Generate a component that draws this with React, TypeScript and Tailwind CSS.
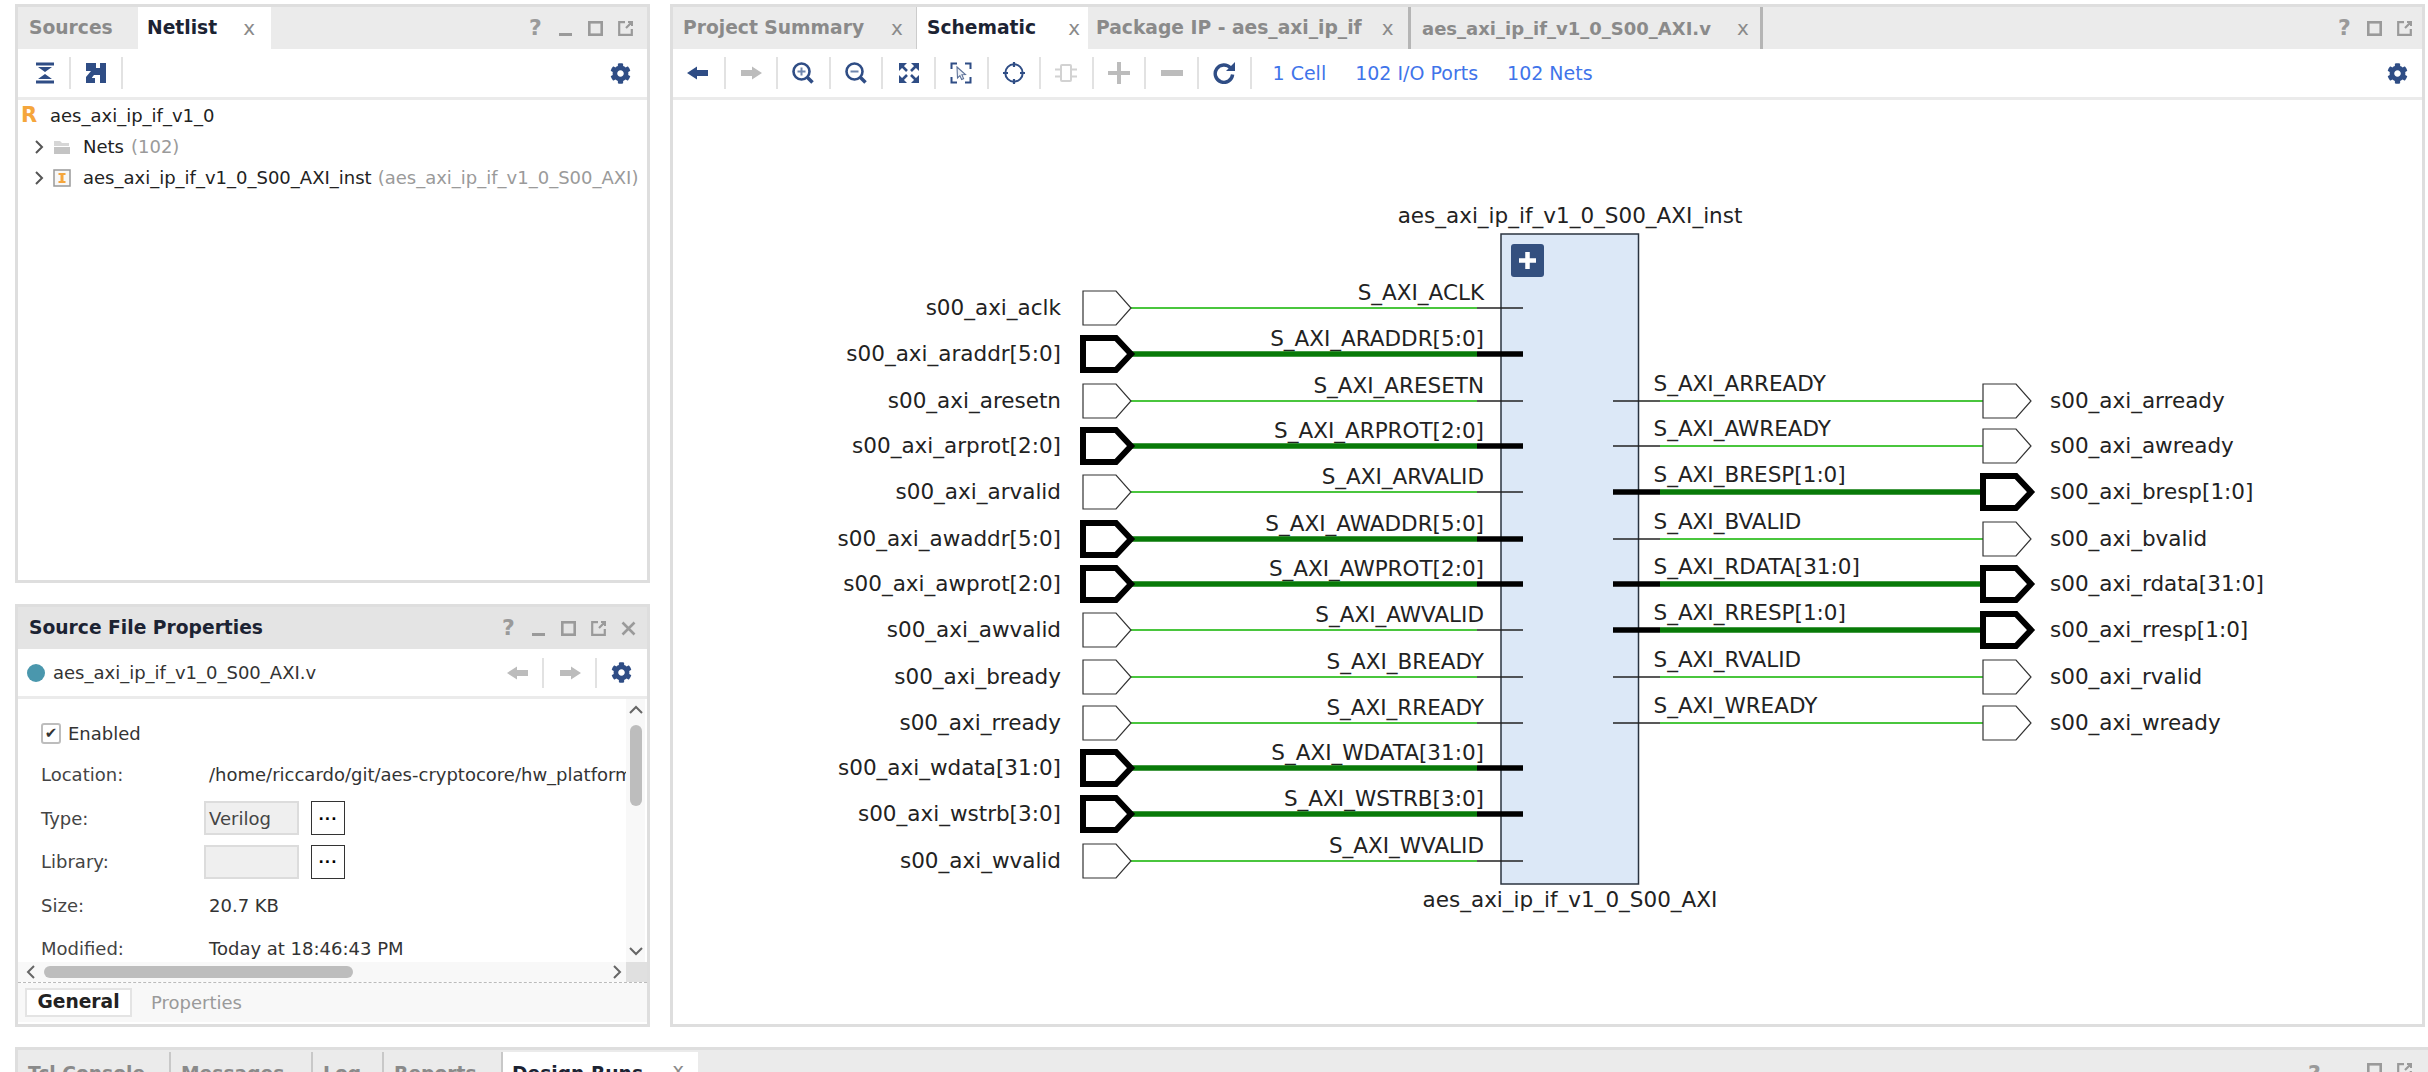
import type { ReactNode } from "react";
import { FaCog } from "react-icons/fa";

/* Vivado-style block design view: netlist + properties on the left, schematic on the right */

const NAVY = "#2f4d85";
const MUTED = "#bcbcbc";

type Net = { y: number; port: string; pin: string; bus?: boolean };

const inputs: Net[] = [
  { y: 208, port: "s00_axi_aclk", pin: "S_AXI_ACLK" },
  { y: 254, port: "s00_axi_araddr[5:0]", pin: "S_AXI_ARADDR[5:0]", bus: true },
  { y: 301, port: "s00_axi_aresetn", pin: "S_AXI_ARESETN" },
  { y: 346, port: "s00_axi_arprot[2:0]", pin: "S_AXI_ARPROT[2:0]", bus: true },
  { y: 392, port: "s00_axi_arvalid", pin: "S_AXI_ARVALID" },
  { y: 439, port: "s00_axi_awaddr[5:0]", pin: "S_AXI_AWADDR[5:0]", bus: true },
  { y: 484, port: "s00_axi_awprot[2:0]", pin: "S_AXI_AWPROT[2:0]", bus: true },
  { y: 530, port: "s00_axi_awvalid", pin: "S_AXI_AWVALID" },
  { y: 577, port: "s00_axi_bready", pin: "S_AXI_BREADY" },
  { y: 623, port: "s00_axi_rready", pin: "S_AXI_RREADY" },
  { y: 668, port: "s00_axi_wdata[31:0]", pin: "S_AXI_WDATA[31:0]", bus: true },
  { y: 714, port: "s00_axi_wstrb[3:0]", pin: "S_AXI_WSTRB[3:0]", bus: true },
  { y: 761, port: "s00_axi_wvalid", pin: "S_AXI_WVALID" },
];

const outputs: Net[] = [
  { y: 301, port: "s00_axi_arready", pin: "S_AXI_ARREADY" },
  { y: 346, port: "s00_axi_awready", pin: "S_AXI_AWREADY" },
  { y: 392, port: "s00_axi_bresp[1:0]", pin: "S_AXI_BRESP[1:0]", bus: true },
  { y: 439, port: "s00_axi_bvalid", pin: "S_AXI_BVALID" },
  { y: 484, port: "s00_axi_rdata[31:0]", pin: "S_AXI_RDATA[31:0]", bus: true },
  { y: 530, port: "s00_axi_rresp[1:0]", pin: "S_AXI_RRESP[1:0]", bus: true },
  { y: 577, port: "s00_axi_rvalid", pin: "S_AXI_RVALID" },
  { y: 623, port: "s00_axi_wready", pin: "S_AXI_WREADY" },
];

function Port({ x, net }: { x: number; net: Net }) {
  const h = net.bus ? 16 : 17;
  return (
    <path
      d={`M${x} ${net.y - h}H${x + 33}L${x + 48} ${net.y}L${x + 33} ${net.y + h}H${x}Z`}
      fill="#fff"
      stroke={net.bus ? "#000" : "#333"}
      strokeWidth={net.bus ? 6 : 1.2}
    />
  );
}

function Schematic() {
  return (
    <svg width="1749" height="920" className="block font-['DejaVu_Sans',sans-serif] text-[21.5px]">
      <rect x="828" y="134" width="137.5" height="650" fill="#dce8f7" stroke="#2b3440" strokeWidth="1.5" />
      <rect x="838" y="144" width="33" height="33" rx="3" fill="#34507f" />
      <path d="M854.5 152v17M846 160.5h17" stroke="#fff" strokeWidth="4.5" />
      <text x="897" y="123" textAnchor="middle" fill="#222">aes_axi_ip_if_v1_0_S00_AXI_inst</text>
      <text x="897" y="807" textAnchor="middle" fill="#222">aes_axi_ip_if_v1_0_S00_AXI</text>

      {inputs.map((n) => (
        <g key={n.port}>
          <text x="388" y={n.y + 7} textAnchor="end" fill="#222">{n.port}</text>
          <text x="811" y={n.y - 8} textAnchor="end" fill="#222">{n.pin}</text>
          <path d={`M458 ${n.y}H804`} stroke={n.bus ? "#087a08" : "#4ac63e"} strokeWidth={n.bus ? 5.5 : 2} />
          <path d={`M804 ${n.y}H850`} stroke={n.bus ? "#000" : "#222"} strokeWidth={n.bus ? 5.5 : 1.5} />
          <Port x={410} net={n} />
        </g>
      ))}

      {outputs.map((n) => (
        <g key={n.port}>
          <text x="1377" y={n.y + 7} fill="#222">{n.port}</text>
          <text x="980.5" y={n.y - 10} fill="#222">{n.pin}</text>
          <path d={`M987 ${n.y}H1310`} stroke={n.bus ? "#087a08" : "#4ac63e"} strokeWidth={n.bus ? 5.5 : 2} />
          <path d={`M940 ${n.y}H987`} stroke={n.bus ? "#000" : "#222"} strokeWidth={n.bus ? 5.5 : 1.5} />
          <Port x={1310} net={n} />
        </g>
      ))}
    </svg>
  );
}

function Icon({ children, color = NAVY, size = 22 }: { children: ReactNode; color?: string; size?: number }) {
  return (
    <svg width={size} height={size} viewBox="0 0 22 22" fill="none" stroke={color}>
      {children}
    </svg>
  );
}

const ArrowLeft = ({ color = NAVY }: { color?: string }) => (
  <Icon color={color}>
    <path d="M0 11l10-6.5V8h11v6H10v3.5z" fill={color} stroke="none" />
  </Icon>
);
const ArrowRight = ({ color = NAVY }: { color?: string }) => (
  <Icon color={color}>
    <path d="M22 11L12 4.5V8H1v6h11v3.5z" fill={color} stroke="none" />
  </Icon>
);

const Zoom = ({ plus }: { plus?: boolean }) => (
  <Icon>
    <circle cx="9.5" cy="9.5" r="8" strokeWidth="2.6" />
    <path d="M15.5 15.5l5 5" strokeWidth="3.6" />
    <path d={plus ? "M5.5 9.5h8M9.5 5.5v8" : "M5.5 9.5h8"} strokeWidth="2" stroke="#6f86ad" />
  </Icon>
);

const FitAll = () => (
  <Icon>
    <path d="M1 1h8L1 9zM21 1h-8l8 8zM1 21h8l-8-8zM21 21h-8l8-8z" fill={NAVY} stroke="none" />
    <path d="M4 4l5 5M18 4l-5 5M4 18l5-5M18 18l-5-5" strokeWidth="2.6" />
  </Icon>
);

const FitSelection = () => (
  <Icon>
    <path d="M1.5 7V1.5H7M15 1.5h5.5V7M20.5 15v5.5H15M7 20.5H1.5V15" strokeWidth="2" />
    <path d="M7 5l8.5 7.5-3.6.3 1.7 3.8-2 .9-1.7-3.9L7.5 16z" fill="#eef1f6" strokeWidth="1.1" stroke="#5c7198" />
  </Icon>
);

const Target = () => (
  <Icon>
    <circle cx="11" cy="11" r="8.7" strokeWidth="2" />
    <path d="M11 0v5M11 17v5M0 11h5M17 11h5" strokeWidth="2.2" />
  </Icon>
);

const Chip = () => (
  <Icon color="#d2d2d2">
    <rect x="6" y="3" width="10" height="16" rx="1" strokeWidth="2" />
    <path d="M0 7.5h6M0 14.5h6M16 7.5h6M16 14.5h6" strokeWidth="2" />
  </Icon>
);

const Plus = () => (
  <Icon color={MUTED}>
    <path d="M11 0v22M0 11h22" strokeWidth="4" />
  </Icon>
);

const Minus = () => (
  <Icon color={MUTED}>
    <path d="M0 11h22" strokeWidth="6" />
  </Icon>
);

const Refresh = () => (
  <Icon>
    <path d="M17.5 6A8.7 8.7 0 1 0 19.6 12.5" strokeWidth="3.4" />
    <path d="M13 9h9V0z" fill={NAVY} stroke="none" />
  </Icon>
);

const ExpandAll = () => (
  <Icon>
    <path d="M2 2h18M2 20h18" strokeWidth="3" />
    <path d="M4 5h14l-7 5zM4 17h14l-7-5z" fill={NAVY} stroke="none" />
  </Icon>
);

const Autoconnect = () => (
  <Icon>
    <path d="M1 1h10v5h4V1h6v20h-6v-8H9l-2 2.5V16h3v5H1v-6l5-6H1z" fill={NAVY} stroke="none" />
  </Icon>
);

function ToolButton({ children }: { children: ReactNode }) {
  return (
    <div className="flex h-[32px] w-[52.6px] items-center justify-center border-r-2 border-[#e2e2e2]">{children}</div>
  );
}

function WindowButtons({ close, minimize = true }: { close?: boolean; minimize?: boolean }) {
  return (
    <div className="flex items-center gap-[15px] text-[#9a9a9a]">
      <span className="w-[15px] text-center text-[22px] leading-none font-bold">?</span>
      {minimize && <svg width="15" height="15" viewBox="0 0 15 15" stroke="currentColor" fill="none" strokeWidth="3"><path d="M1 13.5h13" /></svg>}
      <svg width="15" height="15" viewBox="0 0 15 15" stroke="currentColor" fill="none" strokeWidth="2.6"><rect x="1.3" y="1.3" width="12.4" height="12.4" /></svg>
      <svg width="15" height="15" viewBox="0 0 15 15" stroke="currentColor" fill="none" strokeWidth="2.2"><path d="M7 1.2H1.2v12.6h12.6V8M8 7l6-6M10 1h4v4" /></svg>
      {close && <svg width="15" height="15" viewBox="0 0 15 15" stroke="currentColor" fill="none" strokeWidth="2.6"><path d="M1.5 1.5l12 12M13.5 1.5l-12 12" /></svg>}
    </div>
  );
}

function TabClose({ className = "" }: { className?: string }) {
  return <span className={`text-[20px] leading-none font-normal text-[#8a8a8a] ${className}`}>x</span>;
}

function Chevron() {
  return (
    <svg width="10" height="16" viewBox="0 0 10 16" fill="none" stroke="#555" strokeWidth="2" className="mr-[9px] ml-[16px]">
      <path d="M2 2l6 6-6 6" />
    </svg>
  );
}

function NetlistPanel() {
  return (
    <section className="flex h-[579px] flex-col border-[3px] border-[#dedede] bg-white">
      <div className="flex h-[42px] items-stretch bg-[#ebebeb]">
        <div className="flex w-[120px] items-center pl-[11px] text-[18.7px] font-bold text-[#8a8a8a]">Sources</div>
        <div className="flex w-[133px] items-center justify-between bg-white pr-[16px] pl-[9px] text-[18.7px] font-bold text-[#1c2333]">
          Netlist
          <TabClose />
        </div>
        <div className="flex-1" />
        <div className="flex items-center pr-[14px]"><WindowButtons /></div>
      </div>
      <div className="flex h-[51px] items-center border-b-[3px] border-[#ebebeb]">
        <div className="flex h-[32px] w-[53px] items-center justify-center border-r-2 border-[#e2e2e2] pl-[2px]"><ExpandAll /></div>
        <div className="flex h-[32px] w-[52px] items-center justify-center border-r-2 border-[#e2e2e2]"><Autoconnect /></div>
        <div className="flex-1" />
        <FaCog className="mr-[16px] text-[21px]" color={NAVY} />
      </div>
      <div className="flex-1 text-[18px] text-[#222]">
        <div className="flex h-[31px] items-center">
          <span className="ml-[3px] w-[29px] text-[21px] font-bold text-[#f5a63c]">R</span>
          aes_axi_ip_if_v1_0
        </div>
        <div className="flex h-[31px] items-center">
          <Chevron />
          <svg width="18" height="16" viewBox="0 0 18 16" className="mr-[12px]">
            <path d="M1 2h6l2 2h7v3H1z" fill="#d6d6d6" />
            <path d="M1 8h16v7H1z" fill="#c4c4c4" />
          </svg>
          Nets<span className="ml-[7px] text-[#9a9a9a]">(102)</span>
        </div>
        <div className="flex h-[31px] items-center">
          <Chevron />
          <svg width="18" height="18" viewBox="0 0 18 18" className="mr-[12px]">
            <rect x="1" y="1" width="16" height="16" fill="#f7f7f7" stroke="#999" strokeWidth="1.5" />
            <path d="M5.5 4h7v2h-2v6h2v2h-7v-2h2V6h-2z" fill="#f5a63c" />
          </svg>
          <span className="whitespace-nowrap">aes_axi_ip_if_v1_0_S00_AXI_inst</span>
          <span className="ml-[6px] whitespace-nowrap text-[#9a9a9a]">(aes_axi_ip_if_v1_0_S00_AXI)</span>
        </div>
      </div>
    </section>
  );
}

function Row({ label, children }: { label: string; children: ReactNode }) {
  return (
    <div className="flex h-[43.5px] items-center">
      <span className="w-[168px] shrink-0 text-[#444]">{label}</span>
      {children}
    </div>
  );
}

function PickField({ value }: { value?: string }) {
  return (
    <>
      <div className="-ml-[5px] flex h-[34px] w-[95px] items-center border-2 border-[#dcdcdc] bg-[#efefef] pl-[3px] text-[#444]">{value}</div>
      <div className="ml-[12px] flex h-[34px] w-[34px] items-center justify-center border border-[#333] bg-white pb-[6px] text-[14px] font-bold tracking-[1px]">...</div>
    </>
  );
}

function PropertiesPanel() {
  return (
    <section className="flex h-[423px] flex-col border-[3px] border-[#dedede] bg-white text-[18px]">
      <div className="flex h-[42px] items-center justify-between bg-[#e4e4e4] px-[11px]">
        <span className="text-[18.7px] font-bold text-[#1c2333]">Source File Properties</span>
        <WindowButtons close />
      </div>
      <div className="flex h-[50px] items-center border-b-[3px] border-[#ebebeb]">
        <span className="mr-[8px] ml-[9px] h-[18px] w-[18px] rounded-full bg-[#4a97ad]" />
        <span className="flex-1 text-[#333]">aes_axi_ip_if_v1_0_S00_AXI.v</span>
        <div className="flex h-[30px] w-[52px] items-center justify-center border-r-2 border-[#e2e2e2] pl-[2px]"><ArrowLeft color={MUTED} /></div>
        <div className="flex h-[30px] w-[53px] items-center justify-center border-r-2 border-[#e2e2e2]"><ArrowRight color={MUTED} /></div>
        <FaCog className="mr-[15px] ml-[14px] text-[21px]" color={NAVY} />
      </div>
      <div className="flex h-[263px]">
        <div className="w-[608px] overflow-hidden pt-[14px] pl-[23px]">
          <div className="flex h-[40px] items-center gap-[7px] text-[#333]">
            <span className="flex h-[21px] w-[20px] items-center justify-center rounded-[3px] border-2 border-[#bdbdbd] text-[15px] leading-none text-[#333]">✔</span>
            Enabled
          </div>
          <Row label="Location:"><span className="whitespace-nowrap text-[#333]">/home/riccardo/git/aes-cryptocore/hw_platform/aes_axi_ip_if_v1_0</span></Row>
          <Row label="Type:"><PickField value="Verilog" /></Row>
          <Row label="Library:"><PickField /></Row>
          <Row label="Size:"><span className="text-[#333]">20.7 KB</span></Row>
          <Row label="Modified:"><span className="text-[#333]">Today at 18:46:43 PM</span></Row>
        </div>
        <div className="flex w-[19px] flex-col items-center justify-between bg-[#f8f8f8] py-[6px]">
          <svg width="14" height="10" viewBox="0 0 14 10" fill="none" stroke="#666" strokeWidth="2"><path d="M1 8l6-6 6 6" /></svg>
          <div className="mb-[129px] -mt-[2px] h-[81px] w-[12px] rounded-[6px] bg-[#bdbdbd]" />
          <svg width="14" height="10" viewBox="0 0 14 10" fill="none" stroke="#666" strokeWidth="2"><path d="M1 2l6 6 6-6" /></svg>
        </div>
      </div>
      <div className="flex h-[21px] border-b border-dashed border-[#bbb]">
        <div className="flex w-[608px] items-center bg-[#f8f8f8] pr-[4px] pl-[8px]">
          <svg width="10" height="16" viewBox="0 0 10 16" fill="none" stroke="#666" strokeWidth="2"><path d="M8 2L2 8l6 6" /></svg>
          <div className="ml-[8px] h-[12px] w-[309px] rounded-[6px] bg-[#bdbdbd]" />
          <div className="flex-1" />
          <svg width="10" height="16" viewBox="0 0 10 16" fill="none" stroke="#666" strokeWidth="2"><path d="M2 2l6 6-6 6" /></svg>
        </div>
        <div className="flex-1 bg-[#e0e0e0]" />
      </div>
      <div className="flex h-[39px] items-center bg-[#f8f8f8] pl-[7px]">
        <div className="flex h-[29px] w-[107px] items-center justify-center border-2 border-[#e4e4e4] bg-white text-[18.7px] font-bold text-[#222]">General</div>
        <span className="ml-[19px] text-[#9a9a9a]">Properties</span>
      </div>
    </section>
  );
}

function SchematicPanel() {
  return (
    <section className="flex h-[1023px] flex-col border-[3px] border-[#dedede] bg-white">
      <div className="flex h-[42px] items-stretch bg-[#ebebeb] text-[18.7px] font-bold">
        <div className="flex w-[243px] items-center pl-[10px] whitespace-nowrap text-[#8a8a8a]">
          Project Summary
          <TabClose className="ml-[27px]" />
        </div>
        <div className="flex w-[172px] items-center justify-between border-l border-[#ccc] bg-white pr-[8px] pl-[10px] text-[#1c2333]">
          Schematic
          <TabClose />
        </div>
        <div className="flex w-[323px] items-center border-r-[3px] border-[#b5b5b5] pl-[8px] whitespace-nowrap text-[#8a8a8a]">
          Package IP - aes_axi_ip_if
          <TabClose className="ml-[20px]" />
        </div>
        <div className="flex w-[352px] items-center border-r-[3px] border-[#b5b5b5] pl-[11px] text-[18px] whitespace-nowrap text-[#8a8a8a]">
          aes_axi_ip_if_v1_0_S00_AXI.v
          <TabClose className="ml-[26px]" />
        </div>
        <div className="flex-1" />
        <div className="flex items-center pr-[10px]"><WindowButtons minimize={false} /></div>
      </div>
      <div className="flex h-[51px] items-center border-b-[3px] border-[#ebebeb]">
        <ToolButton><ArrowLeft /></ToolButton>
        <ToolButton><ArrowRight color={MUTED} /></ToolButton>
        <ToolButton><Zoom plus /></ToolButton>
        <ToolButton><Zoom /></ToolButton>
        <ToolButton><FitAll /></ToolButton>
        <ToolButton><FitSelection /></ToolButton>
        <ToolButton><Target /></ToolButton>
        <ToolButton><Chip /></ToolButton>
        <ToolButton><Plus /></ToolButton>
        <ToolButton><Minus /></ToolButton>
        <ToolButton><Refresh /></ToolButton>
        <div className="ml-[21px] flex items-center gap-[29px] text-[19px] text-[#3f74ea]">
          <span>1 Cell</span>
          <span>102 I/O Ports</span>
          <span>102 Nets</span>
        </div>
        <div className="flex-1" />
        <FaCog className="mr-[14px] text-[21px]" color={NAVY} />
      </div>
      <div className="flex-1 overflow-hidden">
        <Schematic />
      </div>
    </section>
  );
}

function BottomTabs() {
  return (
    <div className="mt-[20px] ml-[15px] flex flex-1 items-start overflow-hidden border-t-[3px] border-l-[3px] border-[#dedede] bg-[#ebebeb] text-[18.7px] font-bold text-[#8a8a8a]">
      <div className="mt-[2px] flex h-[40px] w-[153px] items-start border-r-2 border-[#c8c8c8] pt-[8px] pl-[10px]">Tcl Console</div>
      <div className="mt-[2px] flex h-[40px] w-[142px] items-start border-r-2 border-[#c8c8c8] pt-[8px] pl-[10px]">Messages</div>
      <div className="mt-[2px] flex h-[40px] w-[71px] items-start border-r-2 border-[#c8c8c8] pt-[8px] pl-[10px]">Log</div>
      <div className="mt-[2px] flex h-[40px] w-[119px] items-start border-r-2 border-[#c8c8c8] pt-[8px] pl-[10px]">Reports</div>
      <div className="mt-[2px] flex h-[40px] w-[195px] items-start justify-between bg-white pt-[8px] pr-[14px] pl-[9px] text-[#1c2333]">
        Design Runs
        <TabClose />
      </div>
      <div className="flex-1" />
      <div className="mt-[13px] mr-[16px] flex items-start text-[#9a9a9a]">
        <span className="mr-[45px] w-[15px] text-center text-[22px] leading-none font-bold">?</span>
        <svg width="15" height="15" viewBox="0 0 15 15" stroke="currentColor" fill="none" strokeWidth="2.6" className="mr-[15px]"><rect x="1.3" y="1.3" width="12.4" height="12.4" /></svg>
        <svg width="15" height="15" viewBox="0 0 15 15" stroke="currentColor" fill="none" strokeWidth="2.2"><path d="M7 1.2H1.2v12.6h12.6V8M8 7l6-6M10 1h4v4" /></svg>
      </div>
    </div>
  );
}

export default function App() {
  return (
    <div className="flex h-[1072px] w-[2428px] flex-col overflow-hidden bg-white font-['DejaVu_Sans',sans-serif]">
      <div className="flex gap-[20px] pt-[4px] pr-[3px] pl-[15px]">
        <div className="flex w-[635px] shrink-0 flex-col gap-[21px]">
          <NetlistPanel />
          <PropertiesPanel />
        </div>
        <div className="min-w-0 flex-1">
          <SchematicPanel />
        </div>
      </div>
      <BottomTabs />
    </div>
  );
}
